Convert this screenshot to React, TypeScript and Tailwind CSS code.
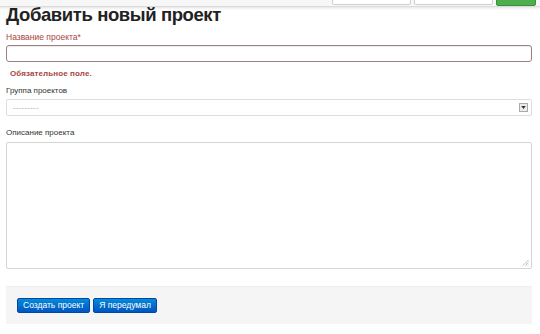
import React from "react";

export default function App() {
  return (
    <div className="w-[540px] h-[334px] bg-white overflow-hidden relative" style={{ fontFamily: '"Liberation Sans", Arial, sans-serif' }}>
      {/* top navbar */}
      <div className="h-[7px] bg-[#f7f7f7] border-b border-[#dcdcdc] shadow-[0_1px_3px_rgba(0,0,0,0.12)] flex justify-end items-end gap-[3px] pr-[4px] overflow-hidden">
        <div className="w-[79px] h-[14px] bg-white border border-[#cfcfcf] rounded-[2px] mb-[1px]" />
        <div className="w-[79px] h-[14px] bg-white border border-[#cfcfcf] rounded-[2px] mb-[1px]" />
        <div className="w-[40px] h-[14px] bg-[#4cae4c] border border-[#3d8b3d] rounded-[2px]" />
      </div>

      <div className="pl-[6px] pr-[8px]">
        <h1 className="text-[18.5px] leading-[18px] font-bold text-[#222] mt-[-1px] tracking-[-0.4px]">Добавить новый проект</h1>

        <div className="mt-[7px] text-[8.5px] leading-[12px] text-[#a94442]">Название проекта*</div>
        <div className="mt-[2px] h-[17px] border border-[#9e8081] rounded-[3px] bg-white shadow-[inset_0_1px_1px_rgba(0,0,0,0.08)]" />
        <div className="mt-[6px] ml-[4px] text-[8px] leading-[12px] font-bold text-[#a94442] tracking-[0.1px]">Обязательное поле.</div>

        <div className="mt-[5px] text-[8px] leading-[12px] text-[#333]">Группа проектов</div>
        <div className="mt-[2px] h-[17px] border border-[#dedede] rounded-[2px] bg-white flex items-center justify-between pl-[6px] pr-[3px]">
          <span className="text-[8px] text-[#aaa] leading-none tracking-[0.2px]">---------</span>
          <div className="w-[9px] h-[9px] border border-[#aaa] bg-[#ececec] flex items-center justify-center">
            <svg width="5" height="3" viewBox="0 0 6 4"><path d="M0 0 L6 0 L3 4 Z" fill="#333" /></svg>
          </div>
        </div>

        <div className="mt-[11px] text-[8px] leading-[12px] text-[#333]">Описание проекта</div>
        <div className="mt-[3px] h-[127px] border border-[#d5d5d5] rounded-[2px] bg-white relative">
          <svg className="absolute right-[2px] bottom-[2px]" width="7" height="7" viewBox="0 0 7 7">
            <path d="M6.5 1 L1 6.5 M6.5 3.5 L3.5 6.5 M6.5 5.8 L5.8 6.5" stroke="#aaa" strokeWidth="0.8" />
          </svg>
        </div>
      </div>

      <div className="mt-[17px] ml-[6px] mr-[8px] h-[38px] bg-[#f5f5f5] border-t border-[#eeeeee] flex items-center gap-[3px] pl-[11px]">
        <button className="h-[15px] px-[5px] rounded-[2px] text-white text-[8.5px] leading-none bg-gradient-to-b from-[#0a8ad8] to-[#0055c0] border border-[#0048a8]">Создать проект</button>
        <button className="h-[15px] px-[5px] rounded-[2px] text-white text-[8.5px] leading-none bg-gradient-to-b from-[#0a8ad8] to-[#0055c0] border border-[#0048a8]">Я передумал</button>
      </div>
    </div>
  );
}
